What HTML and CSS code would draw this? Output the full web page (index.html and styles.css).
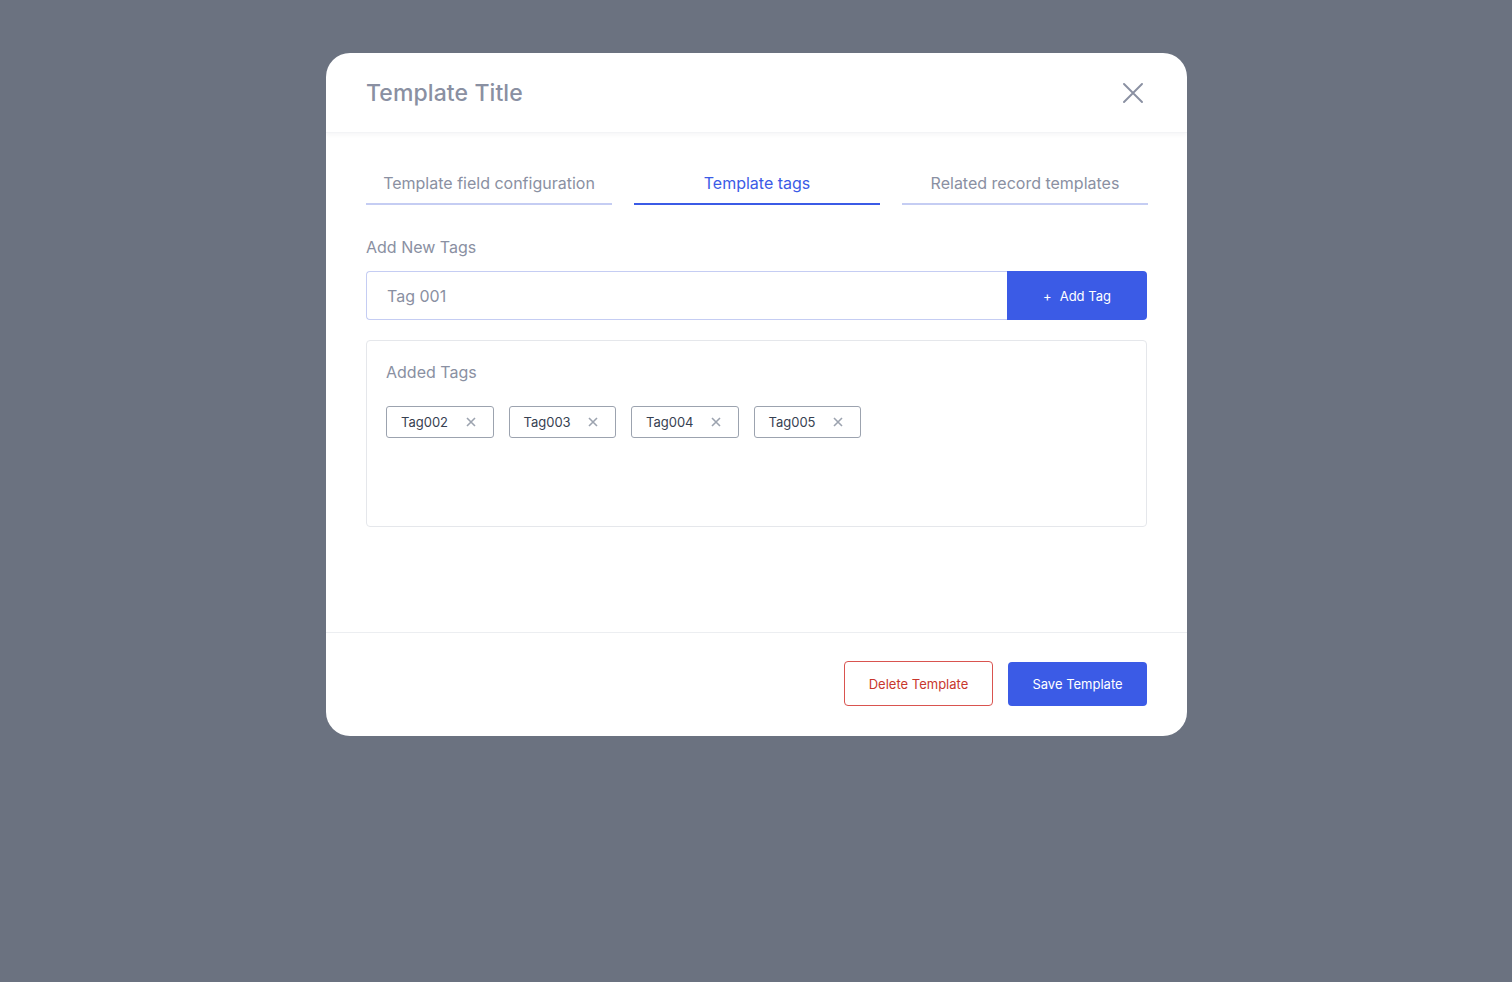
FILE: index.html
```html
<!DOCTYPE html>
<html>
<head>
<meta charset="utf-8">
<link rel="stylesheet" href="styles.css">
</head>
<body>
<div class="overlay">
  <div class="modal">
    <div class="modal-header">
      <h1 class="title">Template Title</h1>
      <button class="close" aria-label="Close">
        <svg width="20" height="20" viewBox="0 0 20 20"><path d="M1 1L19 19M19 1L1 19" stroke="#8a90a2" stroke-width="1.9" stroke-linecap="round"/></svg>
      </button>
    </div>
    <div class="modal-body">
      <div class="tabs">
        <div class="tab">Template field configuration</div>
        <div class="tab active">Template tags</div>
        <div class="tab">Related record templates</div>
      </div>
      <div class="label">Add New Tags</div>
      <div class="add-row">
        <div class="input">Tag 001</div>
        <button class="add-btn"><span class="plus">+</span>Add Tag</button>
      </div>
      <div class="tags-box">
        <div class="box-label">Added Tags</div>
        <div class="tag-list">
          <div class="tag"><span>Tag002</span><svg width="10" height="10" viewBox="0 0 10 10"><path d="M1 1L9 9M9 1L1 9" stroke="#9ca3af" stroke-width="1.6"/></svg></div>
          <div class="tag"><span>Tag003</span><svg width="10" height="10" viewBox="0 0 10 10"><path d="M1 1L9 9M9 1L1 9" stroke="#9ca3af" stroke-width="1.6"/></svg></div>
          <div class="tag"><span>Tag004</span><svg width="10" height="10" viewBox="0 0 10 10"><path d="M1 1L9 9M9 1L1 9" stroke="#9ca3af" stroke-width="1.6"/></svg></div>
          <div class="tag"><span>Tag005</span><svg width="10" height="10" viewBox="0 0 10 10"><path d="M1 1L9 9M9 1L1 9" stroke="#9ca3af" stroke-width="1.6"/></svg></div>
        </div>
      </div>
    </div>
    <div class="modal-footer">
      <button class="btn-delete">Delete Template</button>
      <button class="btn-save">Save Template</button>
    </div>
  </div>
</div>
</body>
</html>
```
FILE: styles.css
```css
* { box-sizing: border-box; }
html, body { margin: 0; padding: 0; }
body {
  background: #6b7280;
  font-family: Inter, "Noto Sans", sans-serif;
  height: 982px;
}
.overlay {
  display: flex;
  justify-content: center;
  padding-top: 53px;
  padding-left: 1px;
}
.modal {
  width: 861px;
  height: 683px;
  background: #fff;
  border-radius: 24px;
  display: flex;
  flex-direction: column;
  overflow: hidden;
}
.modal-header {
  height: 80px;
  flex: none;
  display: flex;
  align-items: center;
  justify-content: space-between;
  padding: 0 44px 0 40px;
  box-shadow: 0 2px 4px rgba(17, 24, 39, 0.04);
  border-bottom: 1px solid #f3f4f6;
  position: relative;
}
.title {
  margin: 0;
  font-size: 23px;
  font-weight: 500;
  color: #8a90a2;
  letter-spacing: 0.1px;
}
.close {
  border: 0;
  background: none;
  padding: 0;
  width: 20px;
  height: 20px;
  display: flex;
}
.modal-body {
  flex: 1;
  padding: 40px 40px 0 40px;
}
.tabs {
  display: flex;
  gap: 22px;
  width: 782px;
}
.tab {
  width: 246px;
  text-align: center;
  font-size: 16px;
  color: #8a90a2;
  padding-bottom: 10px;
  border-bottom: 2px solid #c5cdf3;
  line-height: 20px;
}
.tab.active {
  color: #3b5be6;
  border-bottom-color: #3b5be6;
}
.label {
  margin-top: 31px;
  font-size: 16px;
  color: #8a90a2;
  line-height: 22px;
}
.add-row {
  display: flex;
  margin-top: 13px;
  height: 49px;
  width: 781px;
}
.input {
  flex: 1;
  border: 1px solid #c5cdf3;
  border-right: 0;
  border-radius: 4px 0 0 4px;
  display: flex;
  align-items: center;
  padding-left: 20px;
  font-size: 16px;
  color: #8a90a2;
}
.add-btn {
  width: 140px;
  border: 0;
  background: #3b5be6;
  color: #fff;
  font-family: inherit;
  font-size: 13px;
  border-radius: 0 4px 4px 0;
  display: flex;
  align-items: center;
  justify-content: center;
  gap: 8px;
  padding: 0;
}
.plus { font-size: 13px; }
.tags-box {
  margin-top: 20px;
  width: 781px;
  height: 187px;
  border: 1px solid #e5e7eb;
  border-radius: 4px;
  padding: 20px 19px;
}
.box-label {
  font-size: 16px;
  color: #8a90a2;
  line-height: 22px;
}
.tag-list {
  display: flex;
  gap: 15px;
  margin-top: 23px;
}
.tag {
  height: 32px;
  width: 107.5px;
  border: 1px solid #9ca3af;
  border-radius: 3px;
  display: flex;
  align-items: center;
  justify-content: space-between;
  padding: 0 17px 0 14px;
  font-size: 13px;
  color: #374151;
}
.modal-footer {
  flex: none;
  height: 104px;
  border-top: 1px solid #eceef1;
  display: flex;
  justify-content: flex-end;
  align-items: flex-start;
  gap: 15px;
  padding: 28px 40px 0 0;
}
.btn-delete {
  width: 149px;
  height: 45px;
  background: #fff;
  border: 1px solid #d9534f;
  border-radius: 4px;
  color: #c8372d;
  font-family: inherit;
  font-size: 13px;
}
.btn-save {
  width: 139px;
  height: 44px;
  margin-top: 1px;
  background: #3b5be6;
  border: 0;
  border-radius: 4px;
  color: #fff;
  font-family: inherit;
  font-size: 13px;
}
```
